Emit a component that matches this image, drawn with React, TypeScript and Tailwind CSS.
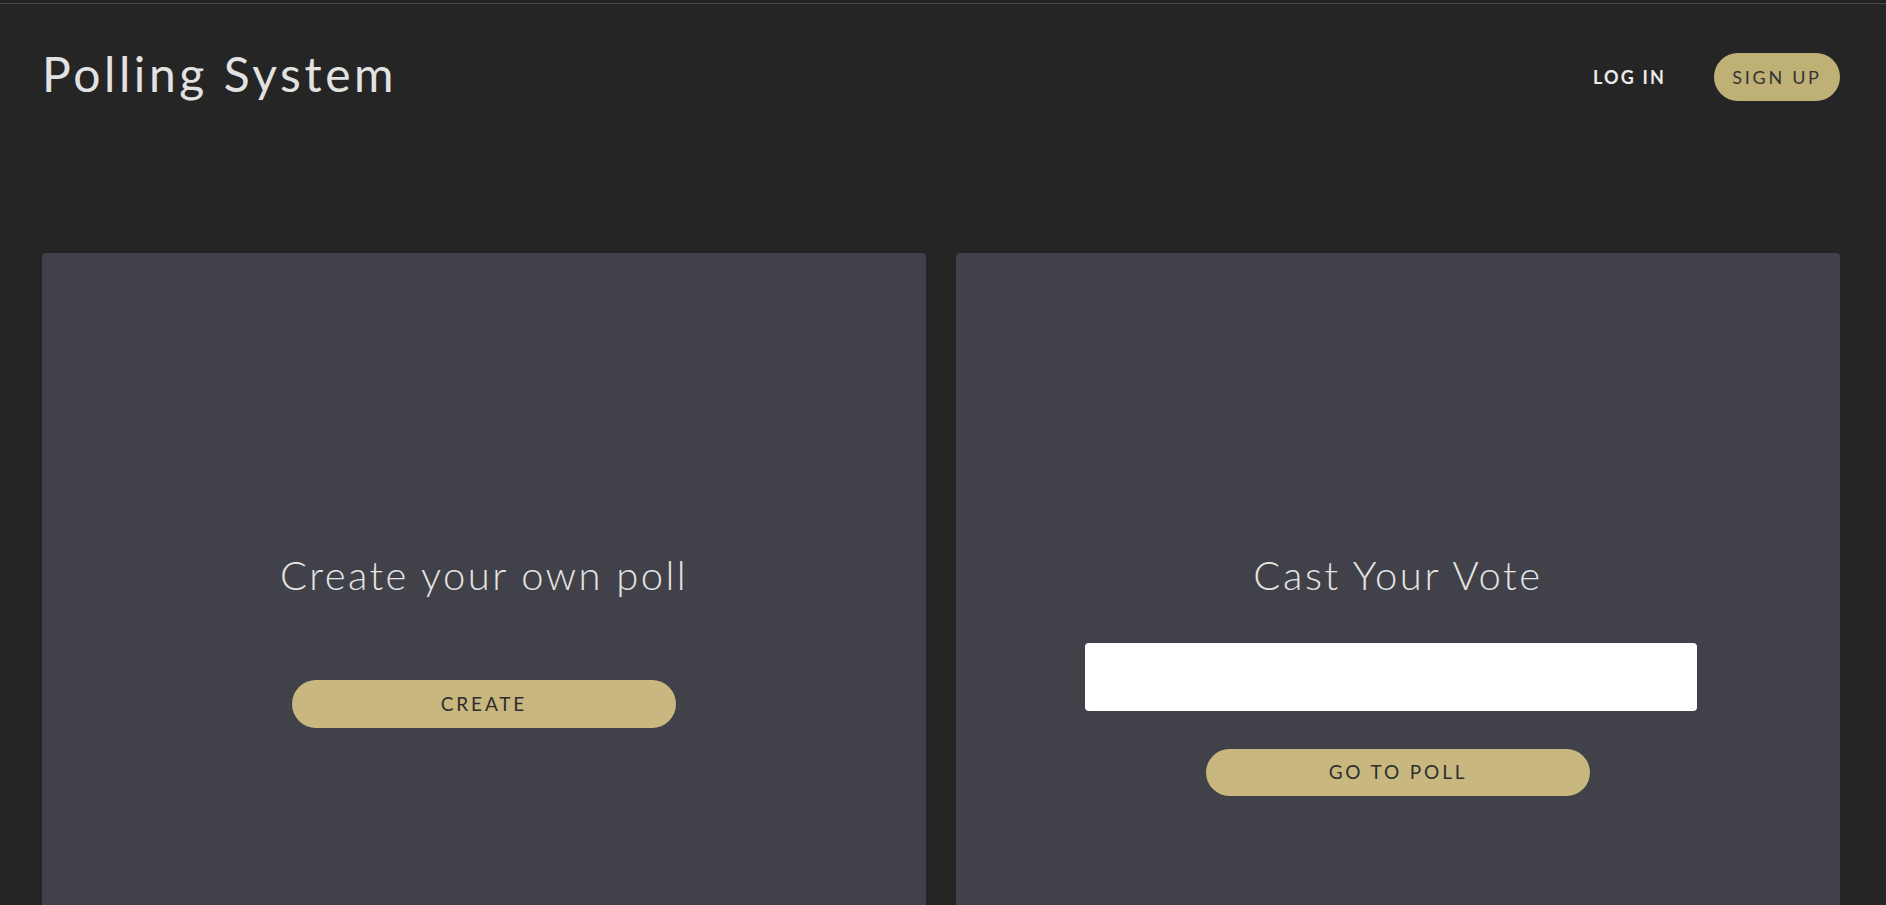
export default function App() {
  return (
    <div className="h-screen flex flex-col overflow-hidden bg-[#252525] font-['Lato',sans-serif]">
      {/* thin top rule */}
      <div className="h-[4px] shrink-0 border-b border-[#4a4a4a] bg-[#222222]" />

      {/* Header */}
      <header className="h-[146px] shrink-0 flex items-center justify-between pl-[42px] pr-[46px]">
        <h1 className="pb-[6px] text-[48px] font-normal tracking-[0.075em] text-[#e2e2e2] leading-none">
          Polling System
        </h1>
        <nav className="flex items-center gap-[48px]">
          <a className="text-[18px] font-bold tracking-[0.12em] text-[#ececec]">LOG IN</a>
          <button className="h-[48px] w-[126px] rounded-full bg-[#bfb076] text-[18px] tracking-[0.15em] text-[#333]">
            SIGN UP
          </button>
        </nav>
      </header>

      {/* Cards */}
      <main className="flex-1 grid grid-cols-2 gap-[30px] pl-[42px] pr-[46px] pt-[103px]">
        <section className="rounded-t-[4px] bg-[#414249] flex flex-col items-center pt-[298px]">
          <h2 className="text-[40px] font-light tracking-[0.06em] leading-[48px] text-[#e4e4e4]">
            Create your own poll
          </h2>
          <button className="mt-[81px] h-[48px] w-[384px] rounded-full bg-[#c8b77e] text-[19px] tracking-[0.15em] text-[#2e2e2e]">
            CREATE
          </button>
        </section>

        <section className="rounded-t-[4px] bg-[#414249] flex flex-col items-center pt-[298px]">
          <h2 className="text-[40px] font-light tracking-[0.065em] leading-[48px] text-[#e4e4e4]">
            Cast Your Vote
          </h2>
          <input
            type="text"
            className="mt-[44px] mr-[14px] h-[68px] w-[612px] rounded-[4px] bg-white px-3 outline-none"
          />
          <button className="mt-[38px] h-[47px] w-[384px] rounded-full bg-[#c8b77e] text-[19px] tracking-[0.15em] text-[#2e2e2e]">
            GO TO POLL
          </button>
        </section>
      </main>
    </div>
  );
}
